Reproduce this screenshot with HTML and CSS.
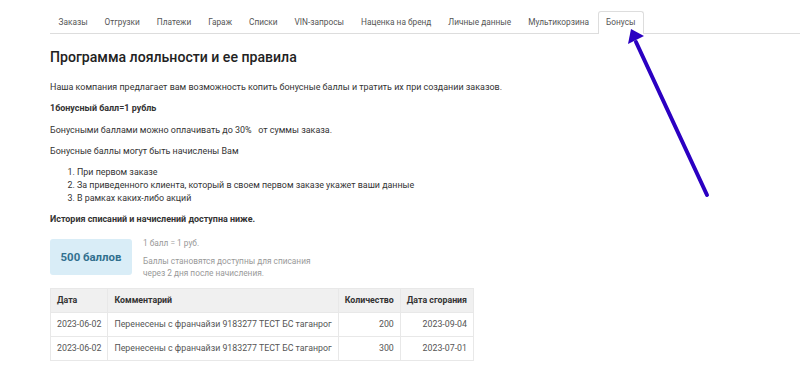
FILE: index.html
```html
<!DOCTYPE html>
<html lang="ru">
<head>
<meta charset="utf-8">
<link rel="stylesheet" href="styles.css">
</head>
<body>
<div class="page">
  <ul class="tabs">
    <li class="tab">Заказы</li>
    <li class="tab">Отгрузки</li>
    <li class="tab">Платежи</li>
    <li class="tab">Гараж</li>
    <li class="tab">Списки</li>
    <li class="tab">VIN-запросы</li>
    <li class="tab">Наценка на бренд</li>
    <li class="tab">Личные данные</li>
    <li class="tab">Мультикорзина</li>
    <li class="tab active">Бонусы</li>
  </ul>
  <div class="content">
    <h1 class="title">Программа лояльности и ее правила</h1>
    <p class="p">Наша компания предлагает вам возможность копить бонусные баллы и тратить их при создании заказов.</p>
    <p class="p bold">1бонусный балл=1 рубль</p>
    <p class="p">Бонусными баллами можно оплачивать до 30%&nbsp;&nbsp; от суммы заказа.</p>
    <p class="p">Бонусные баллы могут быть начислены Вам</p>
    <ol class="list">
      <li>При первом заказе</li>
      <li>За приведенного клиента, который в своем первом заказе укажет ваши данные</li>
      <li>В рамках каких-либо акций</li>
    </ol>
    <p class="p bold">История списаний и начислений доступна ниже.</p>
    <div class="balance">
      <div class="badge">500 баллов</div>
      <div class="note">
        <div class="note-line">1 балл = 1 руб.</div>
        <div class="note-block">Баллы становятся доступны для списания<br>через 2 дня после начисления.</div>
      </div>
    </div>
    <table class="table">
      <thead>
        <tr><th>Дата</th><th>Комментарий</th><th>Количество</th><th>Дата сгорания</th></tr>
      </thead>
      <tbody>
        <tr><td>2023-06-02</td><td>Перенесены с франчайзи 9183277 ТЕСТ БС таганрог</td><td class="num">200</td><td class="num">2023-09-04</td></tr>
        <tr><td>2023-06-02</td><td>Перенесены с франчайзи 9183277 ТЕСТ БС таганрог</td><td class="num">300</td><td class="num">2023-07-01</td></tr>
      </tbody>
    </table>
  </div>
</div>
<svg class="arrow" width="800" height="374" viewBox="0 0 800 374">
  <line x1="707" y1="195" x2="636" y2="42" stroke="#2b00c2" stroke-width="4" stroke-linecap="round"/>
  <polygon points="631,29 644,36 628,44" fill="#2b00c2"/>
</svg>
</body>
</html>
```
FILE: styles.css
```css
html, body {
  margin: 0;
  padding: 0;
  background: #fff;
}
body {
  font-family: Roboto, "Noto Sans", sans-serif;
  color: #333;
  font-size: 9px;
}
.page {
  padding: 11px 0 0 50px;
}
.tabs {
  list-style: none;
  margin: 0;
  padding: 0;
  display: flex;
  border-bottom: 1px solid #ddd;
  height: 22px;
}
.tab {
  padding: 0 7.5px;
  line-height: 21px;
  font-size: 8.3px;
  color: #555;
  border: 1px solid transparent;
  border-bottom: none;
  border-radius: 3px 3px 0 0;
  margin-bottom: -1px;
  height: 22px;
}
.tab.active {
  border-color: #ddd;
  background: #fff;
}
.content {
  width: 700px;
}
.title {
  font-size: 14.1px;
  font-weight: 500;
  color: #222;
  margin: 13px 0 0;
  line-height: 20px;
}
.p {
  margin: 14px 0 0;
  line-height: 13px;
  font-size: 8.95px;
}
.p + .p {
  margin-top: 8.4px;
}
.bold {
  font-weight: 700;
}
.list {
  margin: 8px 0 0;
  padding: 0 0 0 27px;
  font-size: 8.9px;
  line-height: 13px;
}
.list + .p {
  margin-top: 8px;
}
.balance {
  display: flex;
  align-items: flex-start;
  margin-top: 12.5px;
  gap: 11px;
}
.badge {
  width: 82px;
  height: 36px;
  background: #d9edf7;
  border-radius: 3px;
  color: #31708f;
  font-weight: 700;
  font-size: 11.4px;
  display: flex;
  align-items: center;
  justify-content: center;
}
.note {
  color: #999;
  font-size: 8.3px;
  line-height: 12px;
  margin-top: -2px;
}
.note-block {
  margin-top: 6px;
}
.table {
  margin-top: 9px;
  border-collapse: collapse;
  font-size: 8.8px;
  border: 1px solid #e8e8e8;
}
.table th, .table td {
  border: 1px solid #e8e8e8;
  padding: 0 6px;
  height: 23px;
  text-align: left;
  color: #555;
}
.table th {
  background: #f0f0f0;
  font-weight: 700;
  color: #333;
}
.table td.num {
  text-align: right;
}
.arrow {
  position: absolute;
  left: 0;
  top: 0;
  pointer-events: none;
}
```
